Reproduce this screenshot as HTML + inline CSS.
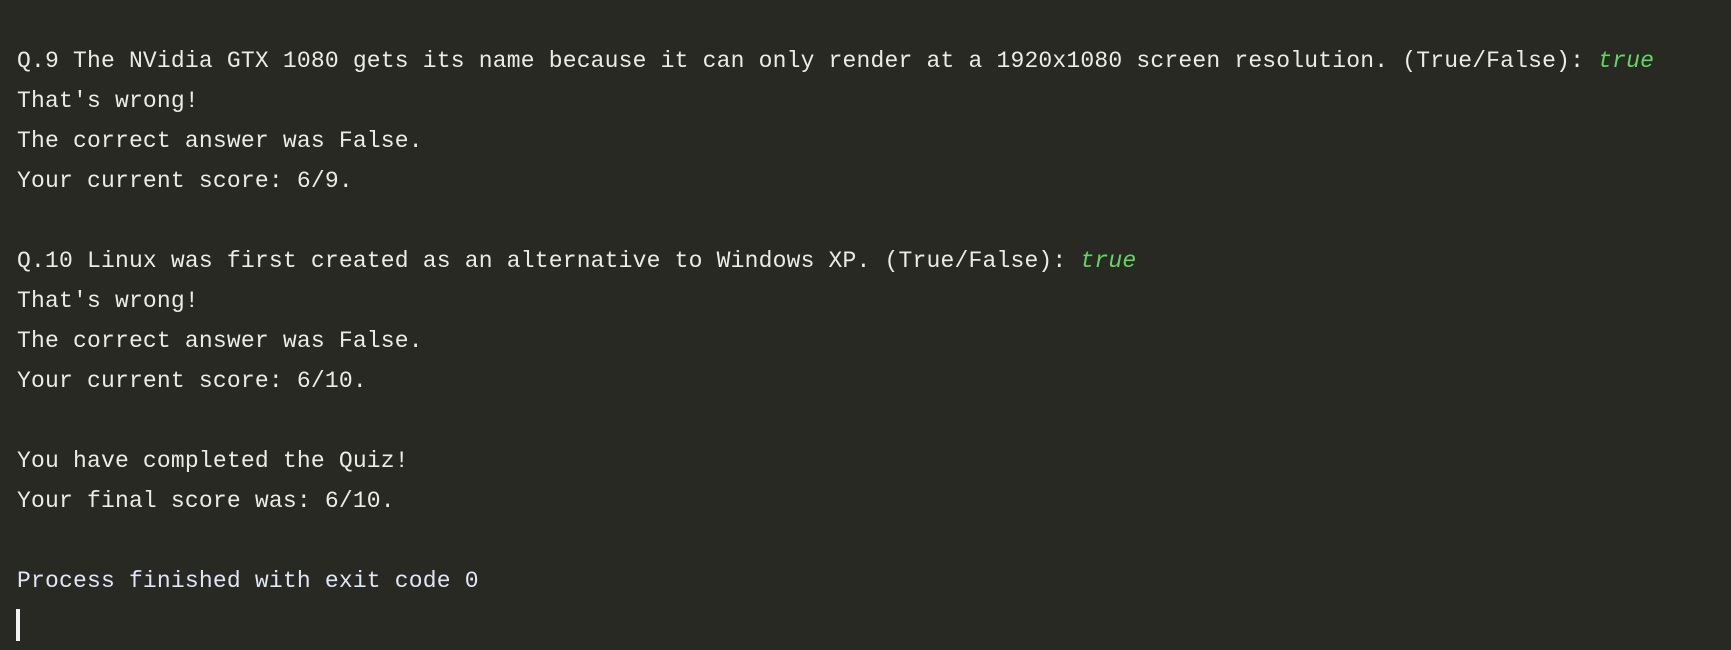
<!DOCTYPE html>
<html><head><style>
html,body{margin:0;padding:0;}
body{width:1731px;height:650px;background:#282923;overflow:hidden;}
pre{margin:0;padding:41px 0 0 17px;font-family:"Liberation Mono",monospace;font-size:23px;letter-spacing:0.19px;line-height:40px;color:#ecece6;}
.g{color:#62d562;font-style:italic;}
.p{color:#dfe6f5;}
.cur{position:absolute;left:16px;top:609px;width:4px;height:32px;background:#f2f2f2;}
</style></head><body>
<pre>Q.9 The NVidia GTX 1080 gets its name because it can only render at a 1920x1080 screen resolution. (True/False): <span class="g">true</span>
That's wrong!
The correct answer was False.
Your current score: 6/9.

Q.10 Linux was first created as an alternative to Windows XP. (True/False): <span class="g">true</span>
That's wrong!
The correct answer was False.
Your current score: 6/10.

You have completed the Quiz!
Your final score was: 6/10.

<span class="p">Process finished with exit code 0</span></pre>
<div class="cur"></div>
</body></html>
